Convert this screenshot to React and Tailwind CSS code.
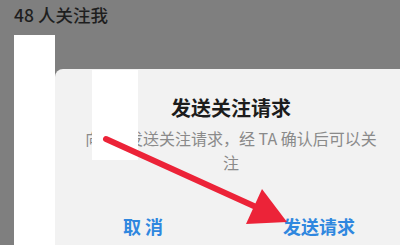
import React from "react";

export default function App() {
  const font = { fontFamily: '"Noto Sans CJK SC", "Noto Sans", sans-serif' };
  return (
    <div
      className="relative w-[400px] h-[245px] overflow-hidden bg-[#7f7f7f] flex flex-col"
      style={font}
    >
      <div className="h-[35px] shrink-0 pl-[14px] pt-[3px] text-[17.5px] leading-[24px] font-medium text-[#1e1e1e]">
        48 人关注我
      </div>
      <div className="flex flex-1">
        <div className="ml-[14px] w-[41px] shrink-0 bg-white" />
        <div className="pt-[34px] flex shrink-0">
          <div className="relative w-[352px] shrink-0 rounded-tl-[8px] bg-[#f2f2f2] flex flex-col items-center">
            <div className="absolute left-[37px] top-[1px] w-[46px] h-[90px] bg-white" />
            <div className="pt-[25px] text-[20px] leading-[28px] font-bold text-[#1c1c1c]">
              发送关注请求
            </div>
            <div className="mt-[4px] text-[16px] leading-[24px] text-[#8a8a8a] text-center">
              向 TA 发送关注请求，经 TA 确认后可以关
              <br />注
            </div>
            <div className="mt-[40px] w-full flex text-[18px] leading-[24px] font-semibold text-[#2f87df]">
              <div className="flex-1 text-center">取 消</div>
              <div className="flex-1 text-center">发送请求</div>
            </div>
          </div>
        </div>
      </div>
      <svg
        className="absolute left-0 top-0 pointer-events-none"
        width="400"
        height="245"
        viewBox="0 0 400 245"
      >
        <line x1="106" y1="139" x2="256" y2="207" stroke="#ec2338" strokeWidth="6" strokeLinecap="round" />
        <polygon points="262,189 287,222 246,224" fill="#ec2338" />
      </svg>
    </div>
  );
}
